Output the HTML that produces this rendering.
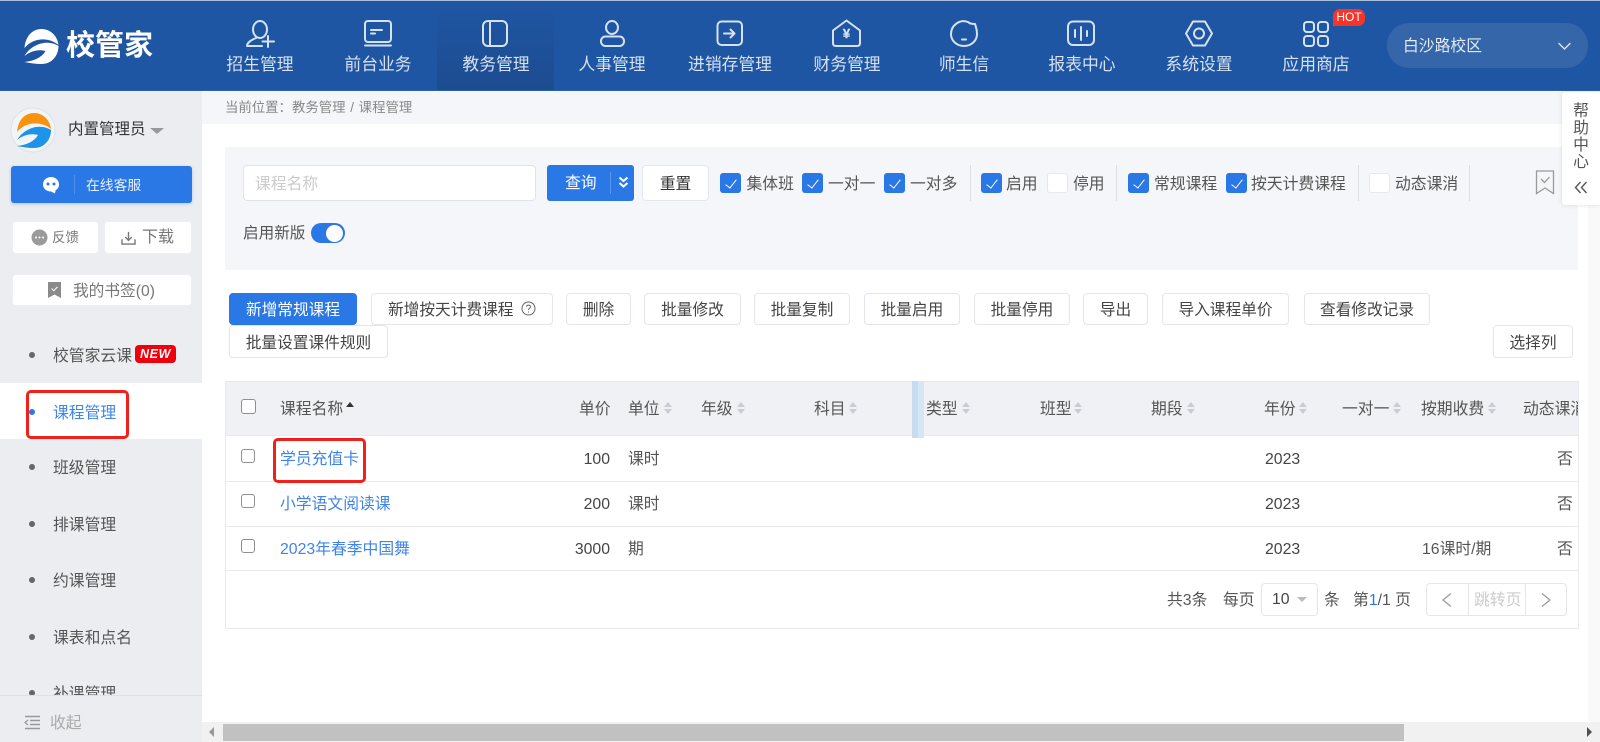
<!DOCTYPE html>
<html lang="zh-CN">
<head>
<meta charset="utf-8">
<title>课程管理</title>
<style>
*{box-sizing:border-box}
html,body{margin:0;padding:0;width:1600px;height:742px;overflow:hidden;background:#fff;font-family:"Liberation Sans","Noto Sans CJK SC",sans-serif;color:#555}
.a{position:absolute}
.t{position:absolute;white-space:nowrap;line-height:20px;height:20px;font-size:15.8px}
.b{position:absolute;display:flex;align-items:center;justify-content:center;background:#fff;border:1px solid #e3e6ed;border-radius:4px;font-size:15.7px;color:#444;white-space:nowrap;padding-bottom:2px}
.nav{position:absolute;top:54px;width:118px;text-align:center;font-size:16.8px;line-height:22px;color:#d6e1f1;white-space:nowrap}
.m{position:absolute;left:53px;font-size:15.8px;line-height:22px;color:#555;white-space:nowrap}
.d{position:absolute;left:29px;width:6px;height:6px;border-radius:50%;background:#666}
.c{position:absolute;top:173px;width:21px;height:20px;border-radius:3px;background:#2a78e6}
.c::after{content:"";position:absolute;left:8px;top:3.5px;width:5px;height:10px;border:solid #fff;border-width:0 1.3px 1.3px 0;transform:rotate(38deg)}
.u{position:absolute;top:173px;width:21px;height:20px;border-radius:3px;background:#fff;border:1px solid #e6e8ed}
.sep{position:absolute;top:165px;width:1px;height:36px;background:#dcdee3}
.s{position:absolute;top:402px;width:8px;height:13px}
.s::before{content:"";position:absolute;left:0;top:0;border:4px solid transparent;border-top:0;border-bottom:5px solid #c9ccd2}
.s::after{content:"";position:absolute;left:0;top:7px;border:4px solid transparent;border-bottom:0;border-top:5px solid #c9ccd2}
.x{position:absolute;width:14px;height:14px;border:1.5px solid #8f8f8f;border-radius:3px;background:#fff}
.l{color:#4083ea}
.red{position:absolute;border:3px solid #f2201c;border-radius:5px;z-index:9}
.line{position:absolute;left:225px;width:1354px;height:1px;background:#e8eaf0}
</style>
</head>
<body>

<!-- Header -->
<div class="a" style="left:0;top:0;width:1600px;height:91px;background:#1f56a3;border-top:1px solid #a9c0dd;border-bottom:1px solid #2a62b2"></div>
<div class="a" style="left:437px;top:1px;width:117px;height:89px;background:linear-gradient(#1f56a3,#1d4c90)"></div>
<div class="a" style="left:1387px;top:23px;width:201px;height:45px;border-radius:22px;background:#3566a9"></div>

<svg class="a" style="left:0;top:0" width="1600" height="91" viewBox="0 0 1600 91" fill="none" stroke="#d6e1f1" stroke-width="2" stroke-linecap="round" stroke-linejoin="round">
  <!-- logo -->
  <g fill="#fff" stroke="none" transform="translate(7.5 -84)">
    <path d="M17 132C18 120 25 113 34 113C43 113 50 120 51 129C43 122 27 120 17 132Z"/>
    <path d="M17 140C24 128 40 123 51 130C51 140 44 148 34 148C28 148 22 147 17 146C26 145 34 142 38 135C31 133 23 135 17 140Z"/>
  </g>
  <!-- 招生 -->
  <ellipse cx="260" cy="29.500" rx="7" ry="8.500"/>
  <path d="M256 38C251 40 247 43 247 46H262M268 36V47M262.500 41.500H274"/>
  <!-- 前台 -->
  <rect x="365" y="21" width="26" height="21" rx="3"/>
  <path d="M365 45.500H391M371 30H382M371 33.500H375"/>
  <!-- 教务 -->
  <rect x="483" y="21" width="24" height="25" rx="5"/>
  <path d="M490 21V46"/>
  <!-- 人事 -->
  <ellipse cx="612" cy="27.500" rx="6" ry="6.500"/>
  <rect x="601" y="36.500" width="23" height="9.500" rx="4.500"/>
  <!-- 进销存 -->
  <rect x="717.500" y="21.500" width="24.500" height="23.500" rx="4"/>
  <path d="M724 33.500H734M730.500 29.500L734.500 33.500L730.500 37.500"/>
  <!-- 财务 -->
  <path d="M846.500 20.500L860 30.500V43C860 45 859 46 857 46H836C834 46 833 45 833 43V30.500Z"/>
  <!-- 师生信 -->
  <path d="M968 22C960 19 951 25 951 34C951 41 957 46 964 46C971 46 977 41 977 34C977 29 976 27 975 24C973 24 970 24 968 22Z"/>
  <path d="M962 39.500H966"/>
  <!-- 报表 -->
  <rect x="1068" y="21.500" width="26" height="23.500" rx="5"/>
  <path d="M1075 30V37M1081 27V40M1087 31V36"/>
  <!-- 系统 -->
  <path d="M1193 21.500H1205L1212 33.500L1205 45.500H1193L1186 33.500Z"/>
  <circle cx="1199" cy="33.500" r="5"/>
  <!-- 应用 -->
  <rect x="1304" y="22" width="10" height="10" rx="3"/>
  <rect x="1318" y="22" width="10" height="10" rx="3"/>
  <rect x="1304" y="36" width="10" height="10" rx="3"/>
  <rect x="1318" y="36" width="10" height="10" rx="3"/>
  <!-- chevron -->
  <path d="M1559 43.500L1564.500 49L1570 43.500" stroke-width="1.500"/>
</svg>
<div class="a" style="left:839px;top:25px;width:15px;text-align:center;font-size:13px;line-height:18px;font-weight:700;color:#d6e1f1;-webkit-text-stroke:.4px #d6e1f1">¥</div>

<div class="a" style="left:66px;top:27px;font-size:29px;line-height:38px;font-weight:700;color:#fff;white-space:nowrap">校管家</div>

<div class="nav" style="left:201px">招生管理</div>
<div class="nav" style="left:319px">前台业务</div>
<div class="nav" style="left:437px">教务管理</div>
<div class="nav" style="left:553px">人事管理</div>
<div class="nav" style="left:671px">进销存管理</div>
<div class="nav" style="left:788px">财务管理</div>
<div class="nav" style="left:905px">师生信</div>
<div class="nav" style="left:1023px">报表中心</div>
<div class="nav" style="left:1140px">系统设置</div>
<div class="nav" style="left:1257px">应用商店</div>

<div class="a" style="left:1333px;top:9px;width:32px;height:17px;background:#f5352a;border-radius:7px 7px 7px 0;color:#fff;font-size:12px;line-height:17px;text-align:center">HOT</div>
<div class="t" style="left:1403px;top:37px;font-size:15.8px;color:#e4ebf5">白沙路校区</div>

<!-- Breadcrumb / backgrounds -->
<div class="a" style="left:202px;top:91px;width:1398px;height:33px;background:#f5f6fa"></div>
<div class="t" style="left:225px;top:98px;font-size:13.4px;word-spacing:1px;color:#888">当前位置：教务管理 / 课程管理</div>
<div class="a" style="left:1588px;top:205px;width:12px;height:517px;background:#f9f9fa"></div>

<!-- Sidebar -->
<div class="a" style="left:0;top:91px;width:202px;height:651px;background:#ebedf1"></div>

<svg class="a" style="left:0;top:100px" width="70" height="60" viewBox="0 100 70 60">
  <circle cx="33" cy="130" r="22" fill="#f3f4f6" stroke="#dfe1e6"/>
  <path fill="#f7930e" d="M17 132C18 120 25 113 34 113C43 113 50 120 51 129C43 122 27 120 17 132Z"/>
  <path fill="#1e93ea" d="M17 140C24 128 40 123 51 130C51 140 44 148 34 148C28 148 22 147 17 146C26 145 34 142 38 135C31 133 23 135 17 140Z"/>
</svg>
<div class="t" style="left:68px;top:120px;font-size:15.5px;color:#333">内置管理员</div>
<div class="a" style="left:150px;top:128px;border:7px solid transparent;border-bottom:0;border-top:6px solid #999"></div>

<div class="a" style="left:11px;top:166px;width:181px;height:37px;background:#2a78e6;border-radius:3px;box-shadow:0 1px 3px rgba(42,120,230,.3)"></div>
<svg class="a" style="left:42px;top:176px" width="18" height="18" viewBox="0 0 18 18">
  <path fill="#fff" d="M9 1C4.500 1 1 4.300 1 8.500C1 12.700 4.500 15.500 9 15.500L13 17.500L13.500 14.500C15.800 13 17 11 17 8.500C17 4.300 13.500 1 9 1Z"/>
  <circle cx="6" cy="8" r="1.500" fill="#2a78e6"/><circle cx="12" cy="8" r="1.500" fill="#2a78e6"/>
</svg>
<div class="a" style="left:74px;top:175px;width:1px;height:19px;background:#4d8fec"></div>
<div class="t" style="left:86px;top:176px;font-size:13.8px;color:#e8f0fc">在线客服</div>

<div class="b" style="left:12px;top:221px;width:87px;height:33px;border-color:#eceef2"></div>
<svg class="a" style="left:31px;top:229px" width="17" height="17" viewBox="0 0 17 17">
  <circle cx="8.500" cy="8.500" r="8" fill="#9a9a9a"/>
  <circle cx="5" cy="8.500" r="1" fill="#fff"/><circle cx="8.500" cy="8.500" r="1" fill="#fff"/><circle cx="12" cy="8.500" r="1" fill="#fff"/>
</svg>
<div class="t" style="left:52px;top:228px;font-size:13.5px;color:#777">反馈</div>
<div class="b" style="left:104px;top:221px;width:88px;height:33px;border-color:#eceef2"></div>
<svg class="a" style="left:121px;top:231px" width="15" height="14" viewBox="0 0 16 15" fill="none" stroke="#777" stroke-width="1.500">
  <path d="M8 1V10M4.500 6.500L8 10L11.500 6.500M1 9V14H15V9"/>
</svg>
<div class="t" style="left:142px;top:228px;font-size:16px;color:#777">下载</div>
<div class="b" style="left:12px;top:274px;width:180px;height:32px;border-color:#eceef2"></div>
<svg class="a" style="left:48px;top:282px" width="13" height="16" viewBox="0 0 13 16">
  <path fill="#8a8a8a" d="M0 0H13V16L6.500 12.500L0 16Z"/>
  <path fill="none" stroke="#eee" stroke-width="1.200" d="M3.500 6.500L5.800 8.800L9.500 4.800"/>
</svg>
<div class="t" style="left:73px;top:282px;font-size:15.7px;color:#777">我的书签(0)</div>

<div class="a" style="left:0;top:383px;width:202px;height:56px;background:#fff"></div>

<div class="d" style="top:352px"></div><div class="m" style="top:346px">校管家云课</div>
<div class="a" style="left:135px;top:345px;width:41px;height:18px;border-radius:4px;background:#f0000a;color:#fff;font:italic 700 12.5px/18px 'Liberation Sans',sans-serif;text-align:center;letter-spacing:.6px">NEW</div>
<div class="d" style="top:409px;background:#2a78e6"></div><div class="m" style="top:403px;color:#3f86ea">课程管理</div>
<div class="d" style="top:464px"></div><div class="m" style="top:458px">班级管理</div>
<div class="d" style="top:521px"></div><div class="m" style="top:515px">排课管理</div>
<div class="d" style="top:577px"></div><div class="m" style="top:571px">约课管理</div>
<div class="d" style="top:634px"></div><div class="m" style="top:628px">课表和点名</div>
<div class="d" style="top:690px"></div><div class="m" style="top:684px">补课管理</div>
<div class="a" style="left:0;top:695px;width:202px;height:47px;background:#ebedf1;border-top:1px solid #dfe1e6"></div>
<svg class="a" style="left:24px;top:715px" width="17" height="15" viewBox="0 0 17 15" fill="none" stroke="#999" stroke-width="1.500">
  <path d="M1 1.500H16M6 5.500H16M6 9.500H16M1 13.500H16"/><path d="M4 5L1 7.500L4 10" stroke-width="1.200"/>
</svg>
<div class="t" style="left:50px;top:714px;font-size:15.8px;color:#aaa">收起</div>
<div class="red" style="left:26px;top:390px;width:103px;height:49px"></div>

<!-- Filter panel -->
<div class="a" style="left:225px;top:147px;width:1353px;height:123px;background:#f5f6fa"></div>
<div class="b" style="left:243px;top:165px;width:293px;height:36px;justify-content:flex-start;padding-left:11px;color:#ccc;font-size:15.8px;border-color:#e0e3ea">课程名称</div>
<div class="a" style="left:547px;top:165px;width:87px;height:36px;background:#2a78e6;border-radius:3px"></div>
<div class="t" style="left:565px;top:174px;color:#fff;font-size:15.8px">查询</div>
<div class="a" style="left:610px;top:172px;width:1px;height:22px;background:#5c98ee"></div>
<svg class="a" style="left:618px;top:176px" width="11" height="13" viewBox="0 0 11 13" fill="none" stroke="#fff" stroke-width="2"><path d="M1.500 1.500L5.500 5L9.500 1.500M1.500 7L5.500 10.500L9.500 7"/></svg>
<div class="b" style="left:642px;top:165px;width:67px;height:36px;color:#333;border-color:#e3e6ed">重置</div>

<div class="c" style="left:720px"></div><div class="t" style="left:746.500px;top:175px">集体班</div>
<div class="c" style="left:802px"></div><div class="t" style="left:828px;top:175px">一对一</div>
<div class="c" style="left:884px"></div><div class="t" style="left:910px;top:175px">一对多</div>
<div class="sep" style="left:970px"></div>
<div class="c" style="left:981px"></div><div class="t" style="left:1006px;top:175px">启用</div>
<div class="u" style="left:1047px"></div><div class="t" style="left:1073px;top:175px">停用</div>
<div class="sep" style="left:1116px"></div>
<div class="c" style="left:1128px"></div><div class="t" style="left:1154px;top:175px">常规课程</div>
<div class="c" style="left:1226px"></div><div class="t" style="left:1251px;top:175px">按天计费课程</div>
<div class="sep" style="left:1358px"></div>
<div class="u" style="left:1369px"></div><div class="t" style="left:1395px;top:175px">动态课消</div>
<div class="sep" style="left:1469px"></div>
<svg class="a" style="left:1535px;top:170px" width="20" height="25" viewBox="0 0 20 25" fill="none" stroke="#9a9a9a" stroke-width="1.300">
  <path d="M1.500 1H18.500V23.500L10 18L1.500 23.500Z"/><path d="M6 9L9.500 12.500L14.500 7"/>
</svg>

<div class="t" style="left:243px;top:224px;font-size:15.6px">启用新版</div>
<div class="a" style="left:311px;top:223px;width:34px;height:20px;border-radius:10px;background:#2a78e6"></div>
<div class="a" style="left:326px;top:224.500px;width:17px;height:17px;border-radius:50%;background:#fff"></div>

<!-- Help -->
<div class="a" style="left:1562px;top:92px;width:38px;height:113px;background:#fff;border-radius:3px 0 0 3px;box-shadow:0 0 5px rgba(0,0,0,.12);z-index:5"></div>
<div class="a" style="left:1573px;top:103px;width:16px;font-size:15.8px;line-height:17px;text-align:center;color:#555;z-index:6">帮助中心</div>
<svg class="a" style="left:1574px;top:181px;z-index:6" width="14" height="13" viewBox="0 0 14 13" fill="none" stroke="#555" stroke-width="1.400"><path d="M6.500 1L1.500 6.500L6.500 12M12.500 1L7.500 6.500L12.500 12"/></svg>

<!-- Toolbar -->
<div class="b" style="left:229px;top:293px;width:128px;height:32px;background:#2a78e6;border-color:#2a78e6;color:#fff">新增常规课程</div>
<div class="b" style="left:371px;top:293px;width:182px;height:32px;justify-content:flex-start;padding-left:16px">新增按天计费课程</div>
<svg class="a" style="left:521px;top:301px" width="15" height="15" viewBox="0 0 15 15" fill="none" stroke="#666"><circle cx="7.500" cy="7.500" r="6.500"/><path d="M5.500 5.800C5.500 3.500 9.500 3.500 9.500 5.800C9.500 7.300 7.500 7.300 7.500 9"/><path d="M7.500 10.500V11.500"/></svg>
<div class="b" style="left:566px;top:293px;width:65px;height:32px">删除</div>
<div class="b" style="left:644px;top:293px;width:97px;height:32px">批量修改</div>
<div class="b" style="left:754px;top:293px;width:96px;height:32px">批量复制</div>
<div class="b" style="left:864px;top:293px;width:96px;height:32px">批量启用</div>
<div class="b" style="left:974px;top:293px;width:96px;height:32px">批量停用</div>
<div class="b" style="left:1083px;top:293px;width:65px;height:32px">导出</div>
<div class="b" style="left:1162px;top:293px;width:127px;height:32px">导入课程单价</div>
<div class="b" style="left:1304px;top:293px;width:126px;height:32px">查看修改记录</div>
<div class="b" style="left:229px;top:325px;width:159px;height:33px;padding-bottom:0">批量设置课件规则</div>
<div class="b" style="left:1493px;top:325px;width:80px;height:33px;padding-bottom:0">选择列</div>

<!-- Table -->
<div class="a" style="left:225px;top:381px;width:1353px;height:54px;background:#f0f1f5;border-top:1px solid #e6e8ee;overflow:hidden"></div>
<div class="a" style="left:225px;top:381px;width:1px;height:247px;background:#e8eaf0"></div>
<div class="a" style="left:1578px;top:381px;width:1px;height:247px;background:#e8eaf0"></div>
<div class="line" style="top:435px"></div>
<div class="line" style="top:481px"></div>
<div class="line" style="top:526px"></div>
<div class="line" style="top:570px"></div>
<div class="line" style="top:628px"></div>
<div class="a" style="left:912px;top:381px;width:6px;height:57px;background:#c6dcf0"></div>
<div class="a" style="left:918px;top:381px;width:6px;height:57px;background:#d5e6f4"></div>

<div class="x" style="left:241px;top:399px;width:15px;height:15px"></div>
<div class="t" style="left:280px;top:400px">课程名称</div>
<div class="a" style="left:346px;top:402px;border:4.500px solid transparent;border-top:0;border-bottom:5px solid #333"></div>
<div class="t" style="left:579px;top:400px">单价</div>
<div class="t" style="left:628px;top:400px">单位</div><i class="s" style="left:664px"></i>
<div class="t" style="left:701px;top:400px">年级</div><i class="s" style="left:737px"></i>
<div class="t" style="left:814px;top:400px">科目</div><i class="s" style="left:849px"></i>
<div class="t" style="left:926px;top:400px">类型</div><i class="s" style="left:962px"></i>
<div class="t" style="left:1040px;top:400px">班型</div><i class="s" style="left:1074px"></i>
<div class="t" style="left:1151px;top:400px">期段</div><i class="s" style="left:1187px"></i>
<div class="t" style="left:1264px;top:400px">年份</div><i class="s" style="left:1299px"></i>
<div class="t" style="left:1342px;top:400px">一对一</div><i class="s" style="left:1393px"></i>
<div class="t" style="left:1421px;top:400px">按期收费</div><i class="s" style="left:1488px"></i>
<div class="a" style="left:1523px;top:400px;width:55px;height:20px;overflow:hidden;font-size:15.8px;line-height:20px;white-space:nowrap">动态课消</div>

<div class="x" style="left:241px;top:449px"></div>
<div class="t l" style="left:280px;top:450px">学员充值卡</div>
<div class="t" style="left:570px;width:40px;text-align:right;top:450px;color:#444">100</div>
<div class="t" style="left:628px;top:450px">课时</div>
<div class="t" style="left:1265px;top:450px;color:#444">2023</div>
<div class="t" style="left:1557px;top:450px">否</div>

<div class="x" style="left:241px;top:494px"></div>
<div class="t l" style="left:280px;top:495px">小学语文阅读课</div>
<div class="t" style="left:570px;width:40px;text-align:right;top:495px;color:#444">200</div>
<div class="t" style="left:628px;top:495px">课时</div>
<div class="t" style="left:1265px;top:495px;color:#444">2023</div>
<div class="t" style="left:1557px;top:495px">否</div>

<div class="x" style="left:241px;top:539px"></div>
<div class="t l" style="left:280px;top:540px">2023年春季中国舞</div>
<div class="t" style="left:560px;width:50px;text-align:right;top:540px;color:#444">3000</div>
<div class="t" style="left:628px;top:540px">期</div>
<div class="t" style="left:1265px;top:540px;color:#444">2023</div>
<div class="t" style="left:1422px;top:540px">16课时/期</div>
<div class="t" style="left:1557px;top:540px">否</div>

<div class="red" style="left:273px;top:438px;width:93px;height:45px"></div>

<!-- Pagination -->
<div class="t" style="left:1167px;top:591px">共3条</div>
<div class="t" style="left:1223px;top:591px">每页</div>
<div class="b" style="left:1261px;top:583px;width:57px;height:33px;justify-content:flex-start;padding:1px 0 0 10px;font-size:15.8px;color:#444">10</div>
<div class="a" style="left:1297px;top:597px;border:5px solid transparent;border-bottom:0;border-top:5px solid #bbb"></div>
<div class="t" style="left:1324px;top:591px">条</div>
<div class="t" style="left:1353px;top:591px">第<span style="color:#2a78e6">1</span>/1 页</div>
<div class="b" style="left:1426px;top:583px;width:141px;height:33px"></div>
<div class="a" style="left:1468px;top:584px;width:1px;height:31px;background:#e3e6ed"></div>
<div class="a" style="left:1525px;top:584px;width:1px;height:31px;background:#e3e6ed"></div>
<div class="t" style="left:1474px;top:591px;color:#ccc">跳转页</div>
<svg class="a" style="left:1440px;top:592px" width="120" height="16" viewBox="0 0 120 16" fill="none" stroke="#999" stroke-width="1.200"><path d="M11 1.500L3 8L11 14.500M102 1.500L110 8L102 14.500"/></svg>

<!-- Scrollbar -->
<div class="a" style="left:202px;top:722px;width:1398px;height:20px;background:#f1f1f1"></div>
<div class="a" style="left:223px;top:724px;width:1181px;height:17px;background:#c1c1c1"></div>
<div class="a" style="left:209px;top:727px;border:5px solid transparent;border-left:0;border-right:5px solid #999"></div>
<div class="a" style="left:1587px;top:727px;border:5px solid transparent;border-right:0;border-left:5px solid #505050"></div>

</body>
</html>
